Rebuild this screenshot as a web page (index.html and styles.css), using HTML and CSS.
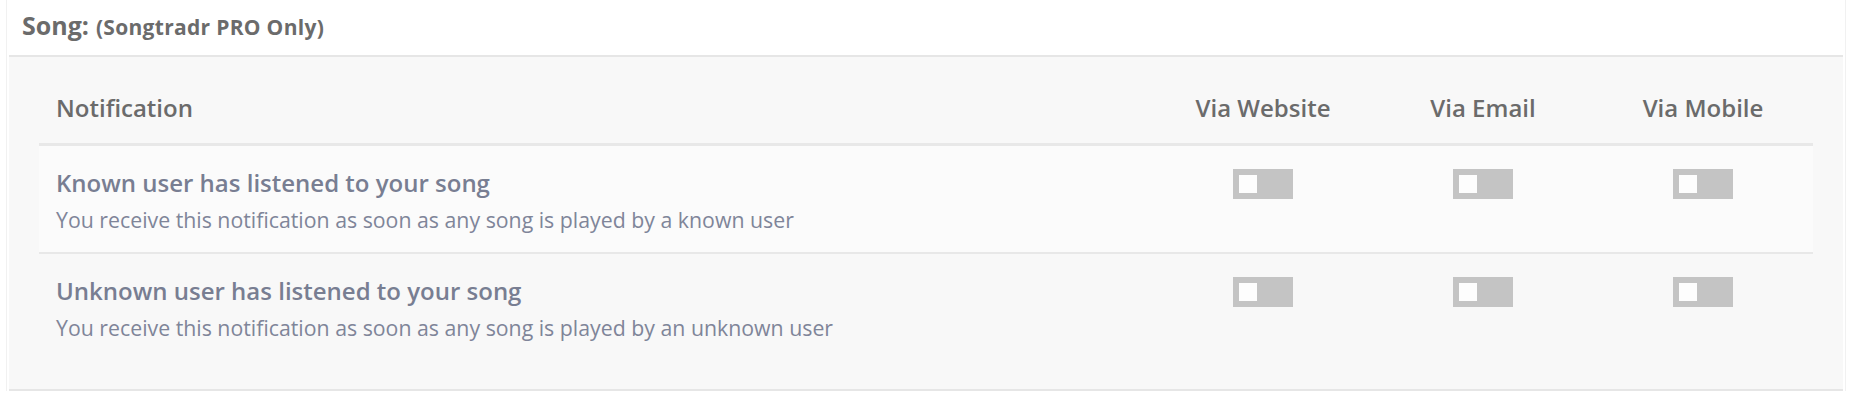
FILE: index.html
```html
<!DOCTYPE html>
<html lang="en">

<head>
  <meta charset="UTF-8">
  <meta name="viewport" content="width=device-width, initial-scale=1.0">
  <title>Notification settings</title>
  <link rel="stylesheet" href="styles.css">
</head>

<body>
  <div class="card">
    <div class="card-header">
      <span class="card-title">Song:</span>
      <span class="card-note">(Songtradr PRO Only)</span>
    </div>

    <div class="card-body">
      <div class="notif-table">
        <div class="notif-row notif-head">
          <div class="cell-name">Notification</div>
          <div class="cell-channel">Via Website</div>
          <div class="cell-channel">Via Email</div>
          <div class="cell-channel">Via Mobile</div>
        </div>

        <div class="notif-row odd">
          <div class="cell-name">
            <div class="notif-title">Known user has listened to your song</div>
            <div class="notif-desc">You receive this notification as soon as any song is played by a known user</div>
          </div>
          <div class="cell-channel"><span class="toggle"><span class="knob"></span></span></div>
          <div class="cell-channel"><span class="toggle"><span class="knob"></span></span></div>
          <div class="cell-channel"><span class="toggle"><span class="knob"></span></span></div>
        </div>

        <div class="notif-row">
          <div class="cell-name">
            <div class="notif-title">Unknown user has listened to your song</div>
            <div class="notif-desc">You receive this notification as soon as any song is played by an unknown user</div>
          </div>
          <div class="cell-channel"><span class="toggle"><span class="knob"></span></span></div>
          <div class="cell-channel"><span class="toggle"><span class="knob"></span></span></div>
          <div class="cell-channel"><span class="toggle"><span class="knob"></span></span></div>
        </div>
      </div>
    </div>
  </div>
</body>

</html>
```

FILE: styles.css
```css
body {
  font-family: 'Open Sans', sans-serif;
  background-color: #ffffff;
  margin: 0;
}

.card {
  margin: 0 6px;
  padding: 0 2px;
  border-left: 1px solid #f1f1f1;
  border-right: 1px solid #f1f1f1;
}

.card-header {
  height: 47px;
  padding: 8px 13px 0;
  border-bottom: 2px solid #e6e6e6;
  color: #6b6b6b;
  display: flex;
  align-items: baseline;
  gap: 7px;
}

.card-title {
  font-size: 25px;
  font-weight: 700;
  line-height: 34px;
}

.card-note {
  font-size: 21px;
  font-weight: 700;
  letter-spacing: 0.3px;
}

.card-body {
  background-color: #f8f8f8;
  padding: 30px 30px 29px;
  border-bottom: 2px solid #e6e6e6;
}

.notif-row {
  display: grid;
  grid-template-columns: 1fr 220px 220px 220px;
  padding: 22px 0 18px;
  border-top: 2px solid #e8e8e8;
}

.notif-row.odd {
  background-color: #fbfbfb;
}

.notif-head {
  border-top: none;
  border-bottom: 3px solid #e8e8e8;
  padding: 9px 0 23px;
  color: #6b6b6b;
  font-size: 24px;
  font-weight: 600;
  line-height: 24px;
}

.notif-head + .notif-row {
  border-top: none;
}

.cell-name {
  padding-left: 17px;
}

.cell-channel {
  display: flex;
  justify-content: center;
}

.notif-title {
  font-size: 24px;
  font-weight: 600;
  line-height: 30px;
  color: #787e92;
}

.notif-desc {
  margin-top: 8px;
  font-size: 21.3px;
  line-height: 28px;
  color: #7f8599;
}

.toggle {
  display: block;
  margin-top: 1px;
  width: 60px;
  height: 30px;
  padding: 6px;
  box-sizing: border-box;
  background-color: #c4c4c4;
}

.knob {
  display: block;
  width: 18px;
  height: 18px;
  background-color: #fdfdfd;
}
```
